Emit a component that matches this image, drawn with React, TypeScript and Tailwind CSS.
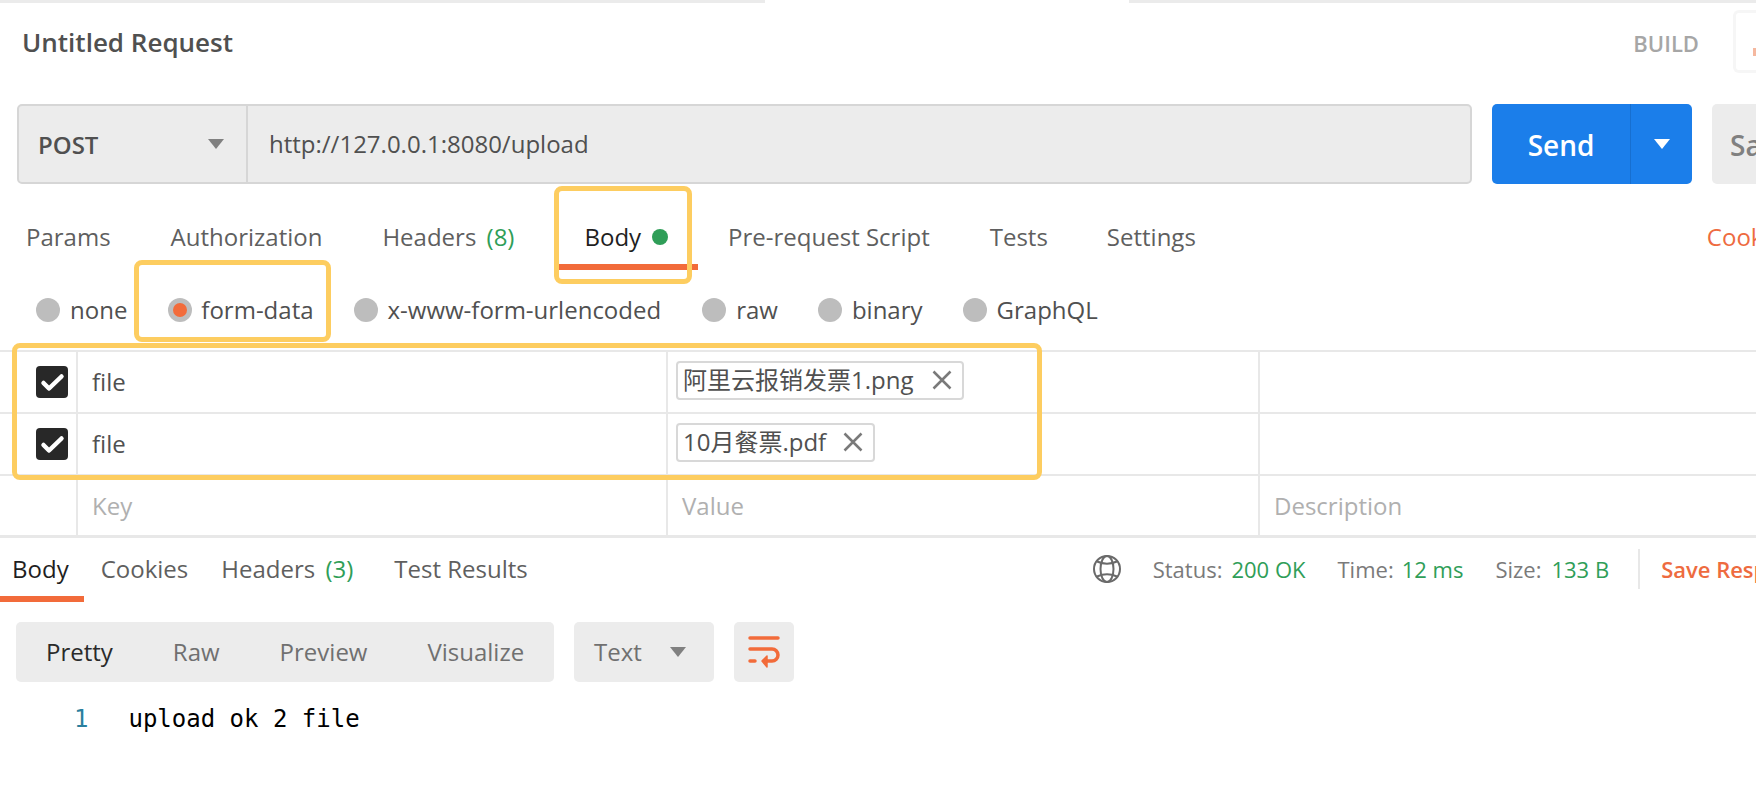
import { clsx } from "clsx"

const FONT = "font-['Open_Sans','Noto_Sans_CJK_SC',sans-serif]"

function Caret({ className }: { className: string }) {
  return (
    <svg viewBox="0 0 16 10" className={clsx("h-[10px] w-4 shrink-0", className)}>
      <path d="M0 0h16L8 10z" fill="currentColor" />
    </svg>
  )
}

function Radio({ label, active, className }: { label: string; active?: boolean; className?: string }) {
  return (
    <div className={clsx("flex shrink-0 items-center", className)}>
      <span className="flex h-6 w-6 items-center justify-center rounded-full bg-[#bdbdbd]">
        {active && <span className="h-[14px] w-[14px] rounded-full bg-[#f26b3a]" />}
      </span>
      <span className={clsx("text-[#505050]", active ? "ml-[9px]" : "ml-[10px]")}>{label}</span>
    </div>
  )
}

function FileRow({ name, chipClass }: { name: string; chipClass: string }) {
  return (
    <div className="flex h-[62px] border-b-2 border-[#e8e8e8]">
      <div className="flex w-[78px] shrink-0 items-center border-r-2 border-[#e8e8e8] pl-9">
        <span className="flex h-8 w-8 items-center justify-center rounded-[4px] bg-[#282828]">
          <svg viewBox="0 0 32 32" fill="none" stroke="#fff" strokeWidth="4.5" strokeLinecap="round" strokeLinejoin="round" className="h-8 w-8">
            <path d="M7.5 17l5.5 5.5L25.5 10.5" />
          </svg>
        </span>
      </div>
      <div className="flex w-[590px] shrink-0 items-center border-r-2 border-[#e8e8e8] pl-[14px] text-[#505050]">file</div>
      <div className="flex w-[592px] shrink-0 items-center border-r-2 border-[#e8e8e8] pl-[8px]">
        <div className={clsx("mb-1 flex h-[39px] items-center justify-between rounded-[4px] border-2 border-[#d8d8d8] pl-[5px] pr-[10px] text-[#505050]", chipClass)}>
          <span className="whitespace-nowrap">{name}</span>
          <svg viewBox="0 0 20 20" fill="none" stroke="#7a7a7a" strokeWidth="2.5" className="h-5 w-5 shrink-0">
            <path d="M1.5 1.5l17 17M18.5 1.5l-17 17" />
          </svg>
        </div>
      </div>
    </div>
  )
}

export default function App() {
  return (
    <div className={clsx("relative h-[796px] w-[1756px] overflow-hidden bg-white text-[24px]", FONT)}>
      {/* top strip */}
      <div className="flex h-[3px] justify-between">
        <div className="w-[765px] bg-[#ebebeb]" />
        <div className="w-[627px] bg-[#ebebeb]" />
      </div>

      {/* title row */}
      <div className="flex h-[101px] items-start justify-between pl-[22px]">
        <div className="mt-5 text-[26px] font-semibold leading-[38px] text-[#505050]">Untitled Request</div>
        <div className="flex items-start">
          <div className="mt-[23px] text-[22px] font-semibold leading-[34px] text-[#a6a6a6]">BUILD</div>
          <div className="ml-[34px] mt-[7px] flex h-[63px] w-[23px] justify-end rounded-l-[6px] border-y-[3px] border-l-[3px] border-[#f6f6f6] pt-[35px]">
            <span className="h-2 w-[3px] bg-[#f5b89f]" />
          </div>
        </div>
      </div>

      {/* url row */}
      <div className="flex h-20 pl-[17px]">
        <div className="flex w-[1455px] shrink-0 rounded-[5px] border-2 border-[#d6d6d6] bg-[#ececec]">
          <div className="flex w-[229px] items-center justify-between border-r-2 border-[#d6d6d6] pl-[19px] pr-[22px]">
            <span className="pt-[2px] font-semibold text-[#505050]">POST</span>
            <Caret className="text-[#808080]" />
          </div>
          <div className="flex items-center pl-[21px] text-[#505050]">http://127.0.0.1:8080/upload</div>
        </div>
        <div className="ml-5 flex w-[200px] shrink-0 rounded-[5px] bg-[#1b7eea] text-white">
          <div className="flex w-[139px] items-center justify-center border-r border-[#176fd0] pt-[2px] text-[28px] font-semibold">Send</div>
          <div className="flex flex-1 items-center justify-center">
            <Caret className="text-white" />
          </div>
        </div>
        <div className="ml-5 flex w-[100px] shrink-0 items-center rounded-[5px] bg-[#ececec] pl-[18px] pt-[2px] text-[28px] font-semibold text-[#808080]">Save</div>
      </div>

      {/* request tabs */}
      <div className="relative flex h-[86px] items-center whitespace-nowrap pl-[26px] pt-5 text-[#5f5f5f]">
        <span>Params</span>
        <span className="ml-[60px]">Authorization</span>
        <span className="ml-[60px]">Headers <span className="ml-1 text-[#2f9e58]">(8)</span></span>
        <span className="ml-[70px] text-[#1f1f1f]">Body</span>
        <span className="ml-[11px] h-4 w-4 shrink-0 rounded-full bg-[#2f9e58]" />
        <span className="ml-[60px]">Pre-request Script</span>
        <span className="ml-[60px]">Tests</span>
        <span className="ml-[59px]">Settings</span>
        <span className="ml-[511px] text-[#ee6b3f]">Cookies</span>
        <div className="absolute bottom-0 left-[559px] h-[6px] w-[139px] bg-[#f26b3a]" />
      </div>

      {/* body type */}
      <div className="flex h-20 items-center pl-9">
        <Radio label="none" />
        <Radio label="form-data" active className="ml-[41px]" />
        <Radio label="x-www-form-urlencoded" className="ml-10" />
        <Radio label="raw" className="ml-[41px]" />
        <Radio label="binary" className="ml-10" />
        <Radio label="GraphQL" className="ml-10" />
      </div>

      {/* params table */}
      <div className="border-t-2 border-[#e8e8e8]">
        <FileRow name="阿里云报销发票1.png" chipClass="w-[288px]" />
        <FileRow name="10月餐票.pdf" chipClass="w-[199px]" />
        <div className="flex h-[62px] border-b-[3px] border-[#e8e8e8] text-[#b0b0b0]">
          <div className="w-[78px] shrink-0 border-r-2 border-[#e8e8e8]" />
          <div className="flex w-[590px] shrink-0 items-center border-r-2 border-[#e8e8e8] pl-[14px]">Key</div>
          <div className="flex w-[592px] shrink-0 items-center border-r-2 border-[#e8e8e8] pl-[14px]">Value</div>
          <div className="flex items-center pl-[14px]">Description</div>
        </div>
      </div>

      {/* response tabs + status */}
      <div className="relative flex h-16 items-center whitespace-nowrap pb-[2px] pl-3 text-[#5f5f5f]">
        <span className="text-[#1f1f1f]">Body</span>
        <span className="ml-8">Cookies</span>
        <span className="ml-[33px]">Headers <span className="ml-1 text-[#2f9e58]">(3)</span></span>
        <span className="ml-[41px]">Test Results</span>
        <div className="absolute bottom-0 left-0 h-[6px] w-[84px] bg-[#f26b3a]" />
        <div className="ml-[565px] flex shrink-0 items-center text-[22px]">
          <svg viewBox="0 0 28 28" fill="none" stroke="#6a6a6a" strokeWidth="2" className="h-7 w-7 shrink-0">
            <circle cx="14" cy="14" r="13" />
            <ellipse cx="14" cy="14" rx="6.5" ry="13" />
            <path d="M4 6.5Q14 11 24 6.5M4 21.5Q14 17 24 21.5" />
          </svg>
          <span className="ml-8 text-[#7a7a7a]">Status:</span>
          <span className="ml-[9px] text-[#2f9e58]">200 OK</span>
          <span className="ml-8 text-[#7a7a7a]">Time:</span>
          <span className="ml-2 text-[#2f9e58]">12 ms</span>
          <span className="ml-8 text-[#7a7a7a]">Size:</span>
          <span className="ml-[10px] text-[#2f9e58]">133 B</span>
          <span className="ml-[29px] h-10 w-[2px] bg-[#e8e8e8]" />
          <span className="ml-[21px] font-semibold text-[#ee6b3f]">Save Response</span>
        </div>
      </div>

      {/* response toolbar */}
      <div className="mt-5 flex h-[60px] pl-4 text-[#707070]">
        <div className="flex w-[538px] items-center rounded-[5px] bg-[#ececec] pl-[30px]">
          <span className="text-[#2a2a2a]">Pretty</span>
          <span className="ml-[60px]">Raw</span>
          <span className="ml-[60px]">Preview</span>
          <span className="ml-[60px]">Visualize</span>
        </div>
        <div className="ml-5 flex w-[140px] items-center justify-between rounded-[5px] bg-[#ececec] pl-5 pr-[28px]">
          <span>Text</span>
          <Caret className="text-[#808080]" />
        </div>
        <div className="ml-5 flex w-[60px] items-center justify-center rounded-[5px] bg-[#ececec]">
          <svg viewBox="0 0 32 32" fill="none" stroke="#f26b3a" strokeWidth="3.5" strokeLinecap="round" className="h-8 w-8">
            <path d="M2 2h28" />
            <path d="M2 13h22a6 6 0 0 1 0 12h-8" />
            <path d="M2 25h5" />
            <path d="M19 20l-5 5 5 6z" fill="#f26b3a" strokeWidth="1.5" strokeLinejoin="round" />
          </svg>
        </div>
      </div>

      {/* response body */}
      <div className="mt-[21px] flex items-center font-['DejaVu_Sans_Mono',monospace] text-[24px] leading-8">
        <span className="ml-[74px] text-[#2a7f9e]">1</span>
        <span className="ml-10 text-black">upload ok 2 file</span>
      </div>

      {/* yellow annotation boxes */}
      <div className="absolute left-[554px] top-[186px] h-[98px] w-[138px] rounded-[8px] border-[5px] border-[#fdcd60]" />
      <div className="absolute left-[134px] top-[260px] h-[82px] w-[197px] rounded-[8px] border-[5px] border-[#fdcd60]" />
      <div className="absolute left-[12px] top-[343px] h-[137px] w-[1030px] rounded-[8px] border-[5px] border-[#fdcd60]" />
    </div>
  )
}
